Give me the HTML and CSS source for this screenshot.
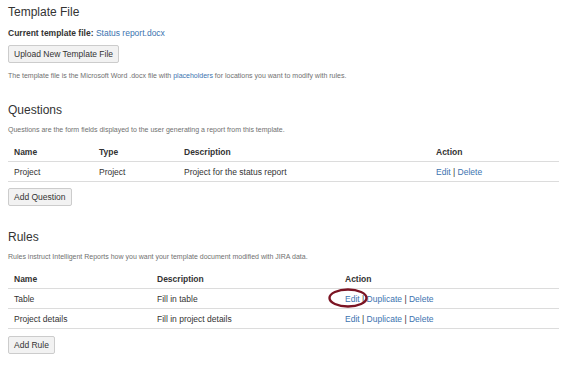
FILE: index.html
```html
<!DOCTYPE html>
<html lang="en">
<head>
    <meta charset="UTF-8">
    <title>Template</title>
    <link rel="stylesheet" href="styles.css">
</head>
<body>
    <!-- Template file -->
    <section class="template-section">
        <h2>Template File</h2>
        <p class="current-file"><strong>Current template file:</strong> <a href="#">Status report.docx</a></p>
        <button class="btn">Upload New Template File</button>
        <p class="help">The template file is the Microsoft Word .docx file with <a href="#">placeholders</a> for locations you want to modify with rules.</p>
    </section>

    <!-- Questions -->
    <section class="questions-section">
        <h2>Questions</h2>
        <p class="help">Questions are the form fields displayed to the user generating a report from this template.</p>
        <table class="grid">
            <colgroup>
                <col style="width: 85px">
                <col style="width: 85px">
                <col style="width: 252px">
                <col>
            </colgroup>
            <thead>
                <tr><th>Name</th><th>Type</th><th>Description</th><th>Action</th></tr>
            </thead>
            <tbody>
                <tr>
                    <td>Project</td>
                    <td>Project</td>
                    <td>Project for the status report</td>
                    <td><a href="#">Edit</a> | <a href="#">Delete</a></td>
                </tr>
            </tbody>
        </table>
        <button class="btn">Add Question</button>
    </section>

    <!-- Rules -->
    <section class="rules-section">
        <h2>Rules</h2>
        <p class="help">Rules instruct Intelligent Reports how you want your template document modified with JIRA data.</p>
        <table class="grid">
            <colgroup>
                <col style="width: 143px">
                <col style="width: 188px">
                <col>
            </colgroup>
            <thead>
                <tr><th>Name</th><th>Description</th><th>Action</th></tr>
            </thead>
            <tbody>
                <tr>
                    <td>Table</td>
                    <td>Fill in table</td>
                    <td><span class="marked"><a href="#">Edit</a><svg class="circle" width="40" height="20" viewBox="0 0 40 20"><ellipse cx="20" cy="10" rx="18.5" ry="8.5" fill="none" stroke="#7b1423" stroke-width="2.4"/></svg></span> | <a href="#">Duplicate</a> | <a href="#">Delete</a></td>
                </tr>
                <tr>
                    <td>Project details</td>
                    <td>Fill in project details</td>
                    <td><a href="#">Edit</a> | <a href="#">Duplicate</a> | <a href="#">Delete</a></td>
                </tr>
            </tbody>
        </table>
        <button class="btn">Add Rule</button>
    </section>
</body>
</html>
```

FILE: styles.css
```css
body {
    font-family: "Liberation Sans", Arial, sans-serif;
    font-size: 8.5px;
    color: #333;
    margin: 0;
    padding: 0 8px;
    background-color: #fff;
}

a {
    color: #3b73af;
    text-decoration: none;
}

h2 {
    font-size: 12px;
    font-weight: normal;
    line-height: 16px;
    margin: 0;
    color: #333;
}

section {
    display: flex;
    flex-direction: column;
    align-items: flex-start;
}

.template-section {
    padding-top: 4px;
}

.questions-section {
    margin-top: 21px;
}

.rules-section {
    margin-top: 23px;
}

.current-file {
    margin: 7px 0 0;
    line-height: 12px;
}

.help {
    font-size: 7px;
    color: #707070;
    line-height: 10px;
    margin: 8px 0 0;
}

.questions-section .help,
.rules-section .help {
    margin-top: 7px;
}

.btn {
    font-family: inherit;
    font-size: 8.5px;
    color: #333;
    background-color: #f2f2f2;
    border: 1px solid #ccc;
    border-radius: 2px;
    height: 18px;
    padding: 0 5px;
    margin-top: 6px;
    cursor: pointer;
}

.grid {
    width: 551px;
    border-collapse: collapse;
    table-layout: fixed;
    margin-top: 7px;
}

.grid th,
.grid td {
    text-align: left;
    padding: 0 6px;
    height: 19px;
    border-bottom: 1px solid #dcdcdc;
}

.grid th {
    font-weight: bold;
}

.rules-section .btn {
    margin-top: 7px;
}

/* annotation drawn over the first Edit link */
.marked {
    position: relative;
}

.circle {
    position: absolute;
    left: -17px;
    top: -6px;
}
```
